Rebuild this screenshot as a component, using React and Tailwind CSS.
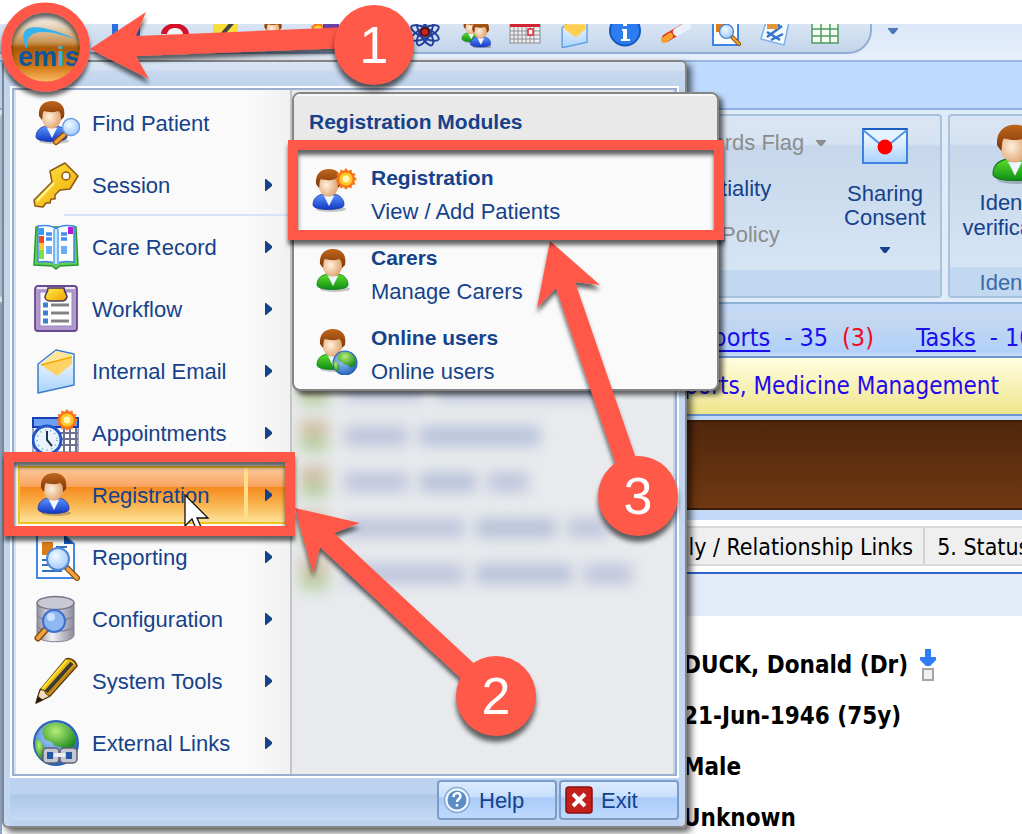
import React from "react";

const ui = "font-['Liberation_Sans',Arial,sans-serif]";
const tahoma = "font-['DejaVu_Sans_Condensed','DejaVu_Sans',sans-serif]";

function Defs() {
  return (
    <svg className="absolute h-0 w-0" aria-hidden="true">
      <defs>
        <linearGradient id="hair" x1="0" y1="0" x2="0" y2="1">
          <stop offset="0" stopColor="#c0661c" />
          <stop offset="1" stopColor="#7a3506" />
        </linearGradient>
        <radialGradient id="face" cx="0.4" cy="0.5" r="0.65">
          <stop offset="0" stopColor="#fff0dd" />
          <stop offset="1" stopColor="#dc9a63" />
        </radialGradient>
        <linearGradient id="blueCoat" x1="0" y1="0" x2="0" y2="1">
          <stop offset="0" stopColor="#5b95ff" />
          <stop offset="1" stopColor="#1437c4" />
        </linearGradient>
        <linearGradient id="greenCoat" x1="0" y1="0" x2="0" y2="1">
          <stop offset="0" stopColor="#5fdc2a" />
          <stop offset="1" stopColor="#0e8f17" />
        </linearGradient>
        <radialGradient id="lens" cx="0.4" cy="0.35" r="0.7">
          <stop offset="0" stopColor="#f2faff" />
          <stop offset="1" stopColor="#9cc6fb" />
        </radialGradient>
        <linearGradient id="gold" x1="0" y1="0" x2="1" y2="1">
          <stop offset="0" stopColor="#fff04a" />
          <stop offset="1" stopColor="#f0a000" />
        </linearGradient>
        <linearGradient id="paper" x1="0" y1="0" x2="0" y2="1">
          <stop offset="0" stopColor="#ffffff" />
          <stop offset="1" stopColor="#a9d2fb" />
        </linearGradient>
        <radialGradient id="sea" cx="0.4" cy="0.35" r="0.7">
          <stop offset="0" stopColor="#a9d6ff" />
          <stop offset="1" stopColor="#1d5cb8" />
        </radialGradient>
        <radialGradient id="land" cx="0.4" cy="0.3" r="0.8">
          <stop offset="0" stopColor="#b6ee7a" />
          <stop offset="1" stopColor="#0b7d10" />
        </radialGradient>
        <linearGradient id="drum" x1="0" y1="0" x2="1" y2="0">
          <stop offset="0" stopColor="#8e8e9e" />
          <stop offset="0.4" stopColor="#f1f1f6" />
          <stop offset="1" stopColor="#8a8a9c" />
        </linearGradient>
        <linearGradient id="orb" x1="0" y1="0" x2="0" y2="1">
          <stop offset="0" stopColor="#ffffff" />
          <stop offset="0.18" stopColor="#ead9c4" />
          <stop offset="0.42" stopColor="#c99352" />
          <stop offset="0.5" stopColor="#a85a04" />
          <stop offset="0.75" stopColor="#cf7411" />
          <stop offset="1" stopColor="#ffc069" />
        </linearGradient>
        <filter id="lift" x="-20%" y="-20%" width="140%" height="150%">
          <feDropShadow dx="0" dy="5" stdDeviation="2" floodColor="#000" floodOpacity="0.6" />
        </filter>
      </defs>
    </svg>
  );
}

function Body({ x = 0, coat = "blue" }) {
  const fill = coat === "blue" ? "url(#blueCoat)" : "url(#greenCoat)";
  return (
    <g transform={`translate(${x} 0)`}>
      <ellipse cx="23" cy="42" rx="15" ry="3" fill="#000" opacity="0.22" />
      <path d="M5 38c0-7 5-10 10-11h11c6 1 10 5 10 11 0 6-31 6-31 0z" fill={fill} stroke={coat === "blue" ? "#1a36a0" : "#0b7a14"} strokeWidth="0.8" />
      <path d="M16 29l5 10 5-10z" fill="#eef6ff" />
      <ellipse cx="20.500" cy="18" rx="10" ry="11.500" fill="url(#face)" />
      <path d="M8 17C7 7 13 2 21 2s14 5 12 16l-3 3c0-6-1-8-3-9-5 2-10 1-14 0-2 2-1 5-2 9z" fill="url(#hair)" />
    </g>
  );
}

function Sun({ x, y, r = 10 }) {
  const pts = [];
  for (let i = 0; i < 24; i++) {
    const a = (i * Math.PI) / 12;
    const d = i % 2 ? r * 0.78 : r;
    pts.push(`${(x + d * Math.cos(a)).toFixed(1)},${(y + d * Math.sin(a)).toFixed(1)}`);
  }
  return (
    <g>
      <polygon points={pts.join(" ")} fill="#f9751b" />
      <circle cx={x} cy={y} r={r * 0.6} fill="#ffc928" />
      <circle cx={x} cy={y} r={r * 0.32} fill="#fff7b5" />
    </g>
  );
}

function Magnifier({ x, y, r = 9 }) {
  return (
    <g>
      <path d={`M${x + r * 0.7} ${y + r * 0.7}L${x + r + 8} ${y + r + 8}`} stroke="#8a4d0a" strokeWidth="6" strokeLinecap="round" />
      <path d={`M${x + r * 0.9} ${y + r * 0.9}L${x + r + 8} ${y + r + 8}`} stroke="#eda43e" strokeWidth="3.500" strokeLinecap="round" />
      <circle cx={x} cy={y} r={r} fill="url(#lens)" stroke="#4f86d6" strokeWidth="2" />
    </g>
  );
}

function Globe({ x, y, r }) {
  return (
    <g transform={`translate(${x} ${y}) scale(${r / 22})`}>
      <circle r="22" fill="url(#sea)" stroke="#2c61b4" strokeWidth="2" />
      <path d="M-12-16C-6-22 8-22 15-14c5 5 6 14 2 18-4 5-8 5-10 1-3-2-8-1-10-4-2-4-7-2-9-6-1-4-3-6 0-11z" fill="url(#land)" />
      <path d="M-20-4c5 1 8 6 9 10 0 4-1 8-3 11-6-6-8-13-6-21z" fill="url(#land)" />
    </g>
  );
}

const Icon = ({ children, size = "h-12 w-12" }) => (
  <svg viewBox="0 0 48 48" className={`${size} shrink-0`} fill="none" aria-hidden="true">{children}</svg>
);

const icons = {
  find: (
    <Icon>
      <Body x={-1} />
      <path d="M32 36l-8 7" stroke="#8a4d0a" strokeWidth="6" strokeLinecap="round" />
      <path d="M32 36l-8 7" stroke="#eda43e" strokeWidth="3.500" strokeLinecap="round" />
      <circle cx="39" cy="28" r="8.500" fill="url(#lens)" stroke="#6d9fe0" strokeWidth="1.500" />
    </Icon>
  ),
  key: (
    <Icon>
      <path d="M18 10L33 2l13 13-8 13-10 1-5 5v4h-4l-1 4h-4l-3 4-8-1-1-6L20 21z" fill="url(#gold)" stroke="#8c5a12" strokeWidth="1.500" strokeLinejoin="round" />
      <path d="M22 22L5 40" stroke="#fff6a0" strokeWidth="2" />
      <circle cx="34" cy="15" r="4" fill="#fafafa" stroke="#8c5a12" strokeWidth="1.500" />
    </Icon>
  ),
  book: (
    <Icon>
      <path d="M4 4h40l2 38-18 1-4 3-4-3-18-1z" fill="#69c85c" stroke="#279c30" strokeWidth="1.500" />
      <path d="M6 3c7-1 14-1 18 3 4-4 11-4 18-3v36c-7-1-14-1-18 2-4-3-11-3-18-2z" fill="#fff" stroke="#3c86ee" strokeWidth="1.500" />
      <path d="M24 6v35" stroke="#79b8f7" strokeWidth="6" />
      <path d="M24 6v35" stroke="#c9e5ff" strokeWidth="2" />
      <path d="M14 11h6M14 16h6M29 11h6M29 16h6" stroke="#3f8ff5" strokeWidth="3.500" />
      <path d="M14 23h6v8h-6zM29 23h6v8h-6z" fill="#6badf5" />
      <path d="M7 5h5v7H7z" fill="#2d9ff0" /><path d="M7 13h5v7H7z" fill="#f3471d" /><path d="M7 20h5v7H7z" fill="#ffc534" /><path d="M7 27h5v9H7z" fill="#7be045" />
      <path d="M36 4h5v7h-5z" fill="#b31bd6" />
    </Icon>
  ),
  clip: (
    <Icon>
      <rect x="3" y="1" width="42" height="45" rx="3" fill="#b09bcc" stroke="#68498f" strokeWidth="1.800" />
      <path d="M5 3h38" stroke="#ede6f7" strokeWidth="2" />
      <rect x="8" y="7" width="32" height="34" fill="#fff" stroke="#9c86bd" />
      <path d="M16 3h16c0 4 3 6 3 9-1 3-3 4-5 4H18c-3 0-5-2-5-4 0-3 3-4 3-9z" fill="url(#gold)" stroke="#49365f" strokeWidth="1.500" />
      <path d="M19 20h18M19 28h18M19 36h18" stroke="#828282" strokeWidth="3" />
      <path d="M11 20h5M11 28h5M11 36h5" stroke="#3b83cc" strokeWidth="5" />
    </Icon>
  ),
  mail: (
    <Icon>
      <path d="M6 17L24 3l18 4v31L6 46z" fill="url(#paper)" stroke="#3b7fc9" strokeWidth="1.500" strokeLinejoin="round" />
      <path d="M9 18L24 4l16 4v9L25 29z" fill="#ffd264" />
      <path d="M9 18L24 4l16 4v2L9 18z" fill="#ffe59a" />
      <path d="M9 18l31-8" stroke="#f3a800" strokeWidth="1.500" />
    </Icon>
  ),
  appt: (
    <Icon>
      <rect x="1" y="9" width="45" height="34" fill="#fff" stroke="#5c5c86" />
      <path d="M1 9h45v9H1z" fill="#6ba2f7" stroke="#1940b0" strokeWidth="2" />
      <path d="M26 24h20M26 30h20M26 36h20M32 19v24M38 19v24M44 19v24" stroke="#71718f" strokeWidth="2" />
      <circle cx="15" cy="31" r="14" fill="#eaf4ff" stroke="#2357c8" strokeWidth="3" />
      <circle cx="15" cy="31" r="10" stroke="#8aa7cb" strokeDasharray="1 4" strokeWidth="2" />
      <path d="M15 22v9l5 6" stroke="#26324d" strokeWidth="2" />
      <Sun x={35} y={11} r={11} />
    </Icon>
  ),
  person: <Icon><Body x={1} /></Icon>,
  report: (
    <Icon>
      <path d="M5 2h27l10 9v34H5z" fill="#fff" stroke="#4188e6" strokeWidth="2" />
      <path d="M32 2l10 9H32z" fill="#1b56b8" />
      <path d="M10 9h11v13H10z" fill="#d97c15" />
      <path d="M24 14h11M10 27h10M10 32h12M10 38h20" stroke="#2e6fc0" strokeWidth="2" />
      <Magnifier x={26} y={26} r={11} />
    </Icon>
  ),
  config: (
    <Icon>
      <path d="M5 8v32c0 9 37 9 37 0V8z" fill="url(#drum)" stroke="#82828f" />
      <path d="M5 20c3 7 34 7 37 0M5 31c3 7 34 7 37 0" stroke="#858594" strokeWidth="1.500" />
      <ellipse cx="23.500" cy="8" rx="18.500" ry="6.500" fill="#c9c9d6" stroke="#777785" strokeWidth="1.500" />
      <path d="M15 33l-9 10" stroke="#8a4d0a" strokeWidth="7" strokeLinecap="round" />
      <path d="M14 34l-8 9" stroke="#eda43e" strokeWidth="4" strokeLinecap="round" />
      <circle cx="22" cy="26" r="11" fill="#8fb8f3" stroke="#3d6fd0" strokeWidth="2" />
      <circle cx="19" cy="22" r="4" fill="#c9e0ff" />
    </Icon>
  ),
  pencil: (
    <Icon>
      <path d="M4 46L8 33 34 2c4-2 10 2 11 7L18 39z" fill="#e8b51c" stroke="#59370e" strokeWidth="1.500" strokeLinejoin="round" />
      <path d="M14 35L40 6" stroke="#3c3a35" strokeWidth="4" />
      <path d="M16 37L43 9" stroke="#c08414" strokeWidth="2" />
      <path d="M10 32L35 3" stroke="#ffe02e" strokeWidth="2.500" />
      <path d="M4 46l4-13 4 0 2 4 4 2z" fill="#f3dcc0" stroke="#59370e" />
      <path d="M4 46l2-7 5 4z" fill="#2b1a10" />
    </Icon>
  ),
  links: (
    <Icon>
      <Globe x={24} y={24} r={22} />
      <rect x="11" y="29" width="16" height="15" rx="4" fill="#c4c7d2" stroke="#5e6274" strokeWidth="1.500" />
      <rect x="28" y="29" width="17" height="15" rx="4" fill="#c4c7d2" stroke="#5e6274" strokeWidth="1.500" />
      <rect x="15" y="33" width="6" height="7" fill="#2457a7" /><rect x="34" y="33" width="6" height="7" fill="#2457a7" />
      <path d="M22 36h11" stroke="#eceef3" strokeWidth="4" />
    </Icon>
  ),
};

const menu = [
  ["Find Patient", "find", false], ["Session", "key", true], ["Care Record", "book", true], ["Workflow", "clip", true],
  ["Internal Email", "mail", true], ["Appointments", "appt", true], ["Registration", "person", true], ["Reporting", "report", true],
  ["Configuration", "config", true], ["System Tools", "pencil", true], ["External Links", "links", true],
];

const Caret = ({ color = "#15428b" }) => (
  <svg viewBox="0 0 10 6" className="h-1.5 w-2.5 shrink-0" aria-hidden="true"><path d="M0 0h10v1L6 6H4L0 1z" fill={color} /></svg>
);

function MenuRow({ label, icon, more, active }) {
  return (
    <li className={active ? "px-0.5 py-0.5" : ""}>
      <button
        type="button"
        className={
          active
            ? "flex h-[58px] w-full items-center gap-3 border-2 border-[#f2c21f] bg-[linear-gradient(#fbc89c_0%,#f9a55f_34%,#f68b1f_36%,#f9b04a_65%,#fde39a_100%)] pl-3 text-left"
            : "flex h-[62px] w-full items-center gap-3 pl-4 text-left"
        }
      >
        {icons[icon]}
        <span className="grow">{label}</span>
        {more && (
          <span className={active ? "flex h-full w-[42px] items-center border-l-4 border-[#fbe08a] pl-[17px]" : "flex h-full w-[25px] items-center"}>
            <svg viewBox="0 0 7 12" className="h-3 w-[7px]" aria-hidden="true"><path d="M0 0h1l6 5v2l-6 5H0z" fill="#15428b" /></svg>
          </span>
        )}
      </button>
    </li>
  );
}

const toolbar = [
  ["Save", <g key="a"><rect x="3" y="2" width="28" height="28" fill="#2d6fe0" /><path d="M9 4h15v12H9z" fill="#dcebff" /><path d="M10 20h14v10H10z" fill="#0f3b8f" /></g>],
  ["Alert", <g key="b"><path d="M2 18C3 4 29 4 30 18z" fill="#d3122a" /><path d="M8 18c1-8 15-8 16 0v12H8z" fill="#f2f4f8" /></g>],
  ["Edit", <g key="c"><rect x="4" y="2" width="25" height="28" fill="#f7dd39" /><path d="M10 22L24 6" stroke="#444" strokeWidth="4" /></g>],
  ["Patient", <g key="d" transform="scale(.68)"><Body /></g>],
  ["Groups", <g key="e"><Sun x={9} y={14} r={8} /><path d="M14 8h16v20H14z" fill="#6b3fa0" /></g>],
  ["Folder", <g key="o"><rect x="4" y="6" width="24" height="20" fill="#f7d154" /></g>],
  ["Research", <g key="f" fill="none" stroke="#243f9c" strokeWidth="2"><ellipse cx="16" cy="17" rx="15" ry="5" transform="rotate(25 16 17)" /><ellipse cx="16" cy="17" rx="15" ry="5" transform="rotate(-25 16 17)" /><ellipse cx="16" cy="17" rx="5" ry="14" transform="rotate(30 16 17)" /><ellipse cx="16" cy="17" rx="5" ry="14" transform="rotate(-30 16 17)" /><circle cx="16" cy="16" r="4" fill="#c6291b" stroke="#5a1010" /></g>],
  ["Users", <g key="g"><g transform="translate(0 1) scale(.58)"><Body coat="green" /></g><g transform="translate(8 3) scale(.66)"><Body /></g></g>],
  ["Calendar", <g key="h"><rect x="1" y="4" width="30" height="23" fill="#eee" stroke="#8a8a8a" /><path d="M1 4h30v7H1z" fill="#d22330" /><path d="M1 15h30M1 19h30M1 23h30M5 11v16M9 11v16M13 11v16M17 11v16M21 11v16M25 11v16" stroke="#8f8f98" /><rect x="19" y="13" width="5" height="6" fill="#fff" stroke="#e5252f" strokeWidth="1.500" /></g>],
  ["Mail", <g key="i" transform="translate(-1 0) scale(.69)"><path d="M6 17L24 3l18 4v31L6 46z" fill="url(#paper)" stroke="#5d9be0" strokeWidth="2" /><path d="M9 12h31v7L26 31 9 19z" fill="#ffcf52" /></g>],
  ["Information", <g key="j"><circle cx="16" cy="14.500" r="15" fill="#2b7df0" stroke="#1558bd" strokeWidth="2" /><path d="M13 13h5v10h3v2h-9v-2h2v-8h-1zM14 7h4v3h-4z" fill="#fff" /></g>],
  ["Medication", <g key="k"><path d="M7 22L24 12" stroke="#e3341b" strokeWidth="8" strokeLinecap="round" /><path d="M18 16L28 10" stroke="#e9f2fc" strokeWidth="8" strokeLinecap="round" /><path d="M5 24l6-4" stroke="#f8a32b" strokeWidth="6" strokeLinecap="round" /></g>],
  ["Search report", <g key="l"><path d="M4 1h25v28H4z" fill="#fff" stroke="#3e85e5" strokeWidth="2" /><path d="M7 4h8v12H7z" fill="#dc7d19" /><g transform="scale(.7)"><Magnifier x={25} y={22} r={10} /></g></g>],
  ["Notes", <g key="m"><path d="M8 2l22 4-5 23-23-6z" fill="#f5faff" stroke="#7fb1ec" strokeWidth="1.500" /><path d="M9 12l12-3M8 16l13 8M8 21l15-11M12 24l12-6" stroke="#3475c8" strokeWidth="2.500" /><path d="M8 5h11v8H8z" fill="#e5963d" /></g>],
  ["Grid", <g key="n"><rect x="3" y="2" width="26" height="25" fill="#f3fbf3" stroke="#4f9a63" strokeWidth="1.500" /><path d="M3 13h26M3 20h26M12 2v25M21 2v25" stroke="#4f9a63" strokeWidth="1.500" /></g>],
];

function QuickAccess() {
  return (
    <div className="flex h-[38px] items-start overflow-hidden border-b-2 border-[#9ab6de] bg-[linear-gradient(#dbe8f9,#e6effb_90%)]">
      <div className="flex h-[30px] w-[872px] shrink-0 items-start overflow-hidden rounded-br-3xl border-r-2 border-b-2 border-[#93aed6] bg-[linear-gradient(#d9e5f4,#c3d5eb)] pl-[100px]">
        {toolbar.map(([name, art]) => (
          <button key={name} type="button" aria-label={name} className="-mt-2 flex w-[50px] shrink-0 justify-center">
            <svg viewBox="0 0 32 32" className="h-8 w-8" fill="none" aria-hidden="true">{art}</svg>
          </button>
        ))}
      </div>
      <button type="button" aria-label="Customise toolbar" className="ml-4 pt-1"><Caret color="#4a78b8" /></button>
    </div>
  );
}

function Ribbon() {
  const panel = "flex flex-col overflow-hidden rounded border-2 border-[#a9c3de] bg-[linear-gradient(#dbe6f4_0px,#d5e2f1_28px,#c6d7eb_30px,#d5e5f4_152px)]";
  return (
    <div className={`${ui} text-[22px] text-[#15428b]`}>
      <div className="h-12 border-b-2 border-[#8db2e3] bg-[#bedaff]" />
      <div className="flex h-[194px] gap-1.5 border-b-2 border-[#8fb0d8] bg-[#e0ebf8] pt-1 pb-1">
        <div className={`${panel} w-[942px] shrink-0`}>
          <div className="flex grow items-start pl-[631px]">
            <div className="flex w-[210px] flex-col gap-5 pt-3.5 leading-[26px]">
              <button type="button" className="flex items-center gap-3 whitespace-nowrap text-left text-[#8d8d8d]">Old Records Flag <Caret color="#8d8d8d" /></button>
              <button type="button" className="text-left">Confidentiality</button>
              <button type="button" className="text-left whitespace-nowrap text-[#8d8d8d]">Consent Policy</button>
            </div>
            <button type="button" className="flex w-[84px] flex-col items-center pt-3 leading-6">
              <svg viewBox="0 0 46 36" className="mb-[18px] h-9 w-[46px]" aria-hidden="true">
                <rect x="1" y="1" width="44" height="34" fill="url(#paper)" stroke="#3c82e2" strokeWidth="2" />
                <path d="M1 2l22 18L45 2" fill="#e4f1ff" stroke="#4f92ea" strokeWidth="2" />
                <path d="M1 1h44" stroke="#1c5fc4" strokeWidth="2" />
                <circle cx="23" cy="19" r="7.500" fill="#f00" />
              </svg>
              Sharing<br />Consent
              <span className="flex h-10 items-center"><Caret /></span>
            </button>
          </div>
          <div className="h-[29px] shrink-0 bg-[#c1d8f0]" />
        </div>
        <div className={`${panel} w-[134px] shrink-0`}>
          <button type="button" className="flex grow flex-col items-center pt-1.5 leading-[25px]">
            <Icon size="h-[66px] w-[66px]"><Body x={3} coat="green" /><circle cx="36" cy="34" r="8" fill="url(#greenCoat)" /></Icon>
            <span className="pt-0.5">Identity<br />verification</span>
          </button>
          <div className="h-[29px] shrink-0 bg-[#c1d8f0] text-center leading-8 text-[#3e6aaa]">Identity</div>
        </div>
      </div>
    </div>
  );
}

function PatientPage() {
  return (
    <div className={`${tahoma} grow border-l-2 border-[#8ba6cd] whitespace-nowrap`}>
      <div className="flex h-[54px] items-center gap-3.5 border-b-2 border-[#6a96d2] bg-[linear-gradient(#c3d9f8_0px,#c3d9f8_8px,#c8d8ec_10px,#b1d1fb_48px,#c3d9f8_50px)] pt-4 pl-[682px] text-[25px] leading-8 text-[#1a10ee]">
        <a href="#reports" className="underline decoration-2 underline-offset-4">Reports</a>
        <span>- 35</span>
        <span className="text-[#f00a1e]">(3)</span>
        <a href="#tasks" className="ml-7 underline decoration-2 underline-offset-4">Tasks</a>
        <span>- 10</span>
      </div>
      <div className="flex h-[58px] items-center border-b-2 border-[#6a96d2] bg-[linear-gradient(#fffee0,#efe48c)] pl-[655px] text-2xl text-[#2408ee]">Reports, Medicine Management</div>
      <div className="border-t-4 border-b-[10px] border-[#c3d9f8]">
        <div className="h-[90px] border-y-2 border-[#3a1c08] bg-[linear-gradient(#50270c,#703812)]" />
      </div>
      <div className="border-b-2 border-[#2d62cf] bg-white py-1.5">
        <div className="flex h-10 items-center border-y-2 border-[#d9d9d9] bg-[#efefef] pl-[638px] text-[23px] text-black">
          <button type="button" className="h-full border-r-2 border-[#d2d2d2] pt-0.5 pr-2.5">Family / Relationship Links</button>
          <button type="button" className="h-full pt-0.5 pl-3">5. Status</button>
        </div>
      </div>
      <div className="h-[42px] bg-[#e4ebf8]" />
      <dl className="flex flex-col gap-[19px] bg-white pt-[33px] pl-[681px] text-2xl leading-8 font-bold text-black">
        <dd className="flex items-center gap-3">DUCK, Donald (Dr)
          <svg viewBox="0 0 16 32" className="h-8 w-4" aria-hidden="true"><path d="M5 0h6v8h5v3l-6 6H6l-6-6V8h5z" fill="#2e7cf6" /><rect x="3" y="20" width="10" height="11" fill="#f0f0f0" stroke="#a5a5a5" strokeWidth="2" /></svg>
        </dd>
        <dd>21-Jun-1946 (75y)</dd>
        <dd>Male</dd>
        <dd>Unknown</dd>
      </dl>
    </div>
  );
}

const recent = [
  ["w-20", "w-40", "w-0"], ["w-16", "w-[120px]", "w-0"], ["w-16", "w-14", "w-10"], ["w-[120px]", "w-20", "w-10"], ["w-[120px]", "w-24", "w-12"],
];

function ModulesPopup() {
  const items = [
    ["Registration", "View / Add Patients", <Icon key="r"><Body x={-3} /><Sun x={35} y={12} r={11} /></Icon>],
    ["Carers", "Manage Carers", <Icon key="c"><Body x={1} coat="green" /></Icon>],
    ["Online users", "Online users", <Icon key="o"><Body x={1} coat="green" /><Globe x={34} y={36} r={12} /></Icon>],
  ];
  return (
    <section className="absolute top-[92px] left-[292px] w-[427px] overflow-hidden rounded-lg border-2 border-[#858585] bg-[#fafafa] text-[#15428b] shadow-[4px_4px_5px_rgba(0,0,0,0.6)]">
      <h2 className="h-[47px] border-t-2 border-[#f6f6f6] bg-[#e9e9e9] pl-[15px] text-[21px] leading-[52px] font-bold">Registration Modules</h2>
      <ul className="flex flex-col gap-3 pt-5">
        {items.map(([title, sub, icon]) => (
          <li key={title}>
            <button type="button" className="flex h-[68px] w-full items-start gap-3 pl-[17px] text-left leading-[34px]">
              <span className="pt-1.5">{icon}</span>
              <span><span className="block text-[21px] font-bold">{title}</span><span className="block text-[22px]">{sub}</span></span>
            </button>
          </li>
        ))}
      </ul>
    </section>
  );
}

function MainMenu() {
  return (
    <section className="absolute top-[60px] left-0.5 w-[685px] rounded-md border-2 border-[#858585] bg-[linear-gradient(#d8e4f5_0px,#d4e1f3_8px,#c8d9ef_9px,#c0d4ee_24px,#c2d8f2_700px)] px-1.5 pt-6 text-[22px] text-[#15428b] shadow-[4px_4px_7px_rgba(0,0,0,0.65)]">
      <div className="border-2 border-white">
        <div className="flex border-2 border-[#98afd0] bg-[#e8eaed]">
          <ul className="w-[278px] shrink-0 border-r-2 border-l-2 border-r-[#c5c5c5] border-l-[#d5e4f5] bg-[linear-gradient(90deg,#fafafa_85%,#f1f1f1)] pt-0.5">
            {menu.map(([label, icon, more]) => (
              <React.Fragment key={label}>
                {label === "Care Record" && <li aria-hidden="true" className="-mt-0.5 ml-12 h-0.5 bg-[#d5e4f7]" />}
                <MenuRow label={label} icon={icon} more={more} active={label === "Registration"} />
              </React.Fragment>
            ))}
          </ul>
          <div className="grow overflow-hidden border-r-2 border-[#c2d6f0] pt-[284px]" aria-hidden="true">
            <div className="flex flex-col gap-[14px] blur-[7px]">
              {recent.map((r, i) => (
                <div key={i} className="flex h-8 items-center gap-3 pl-2">
                  <span className="h-8 w-7 bg-[linear-gradient(#d9b9a5,#b3d6a6)]" />
                  <span className={`${r[0]} ml-1 h-5 bg-[#c0c6dd]`} />
                  <span className={`${r[1]} h-5 bg-[#b9c3da]`} />
                  <span className={`${r[2]} h-5 bg-[#c0c6dd]`} />
                </div>
              ))}
            </div>
          </div>
        </div>
      </div>
      <div className="flex h-12 justify-end gap-0.5 bg-[linear-gradient(#bdd2ef_16px,#aec7e8_17px,#c5d9f3_42px,#bdd2ef_43px)] pt-0.5">
        <button type="button" className="flex h-10 w-[120px] items-center gap-2 rounded border-2 border-[#7c9bc8] bg-[linear-gradient(#dcebff_0%,#c8dffc_40%,#a9cbf9_45%,#bfdafd_100%)] pl-1">
          <svg viewBox="0 0 28 28" className="h-7 w-7" fill="none" aria-hidden="true"><circle cx="14" cy="14" r="12.500" fill="#edf5ff" stroke="#86a8cf" strokeWidth="1.500" /><circle cx="14" cy="14" r="9.500" fill="#5b8dc4" /><path d="M10.500 11c0-5 7-5 7-1 0 3-3.500 3-3.500 6M14 18v2.500" stroke="#fff" strokeWidth="2.500" /></svg>
          Help
        </button>
        <button type="button" className="flex h-10 w-[120px] items-center gap-2 rounded border-2 border-[#7c9bc8] bg-[linear-gradient(#dcebff_0%,#c8dffc_40%,#a9cbf9_45%,#bfdafd_100%)] pl-1">
          <svg viewBox="0 0 28 28" className="h-7 w-7" fill="none" aria-hidden="true"><rect x="1" y="1" width="26" height="26" rx="3" fill="#c3201c" stroke="#8a0f0d" strokeWidth="1.500" /><path d="M8 8l12 12M20 8L8 20" stroke="#fff" strokeWidth="4" /></svg>
          Exit
        </button>
      </div>
    </section>
  );
}

function Badge({ n, place }) {
  return (
    <div className={`${place} absolute flex h-20 w-20 items-center justify-center rounded-full bg-[#ff594a] text-[52px] leading-none text-white shadow-[0_6px_5px_rgba(0,0,0,0.6)]`}>{n}</div>
  );
}

function Annotations() {
  return (
    <div className="pointer-events-none absolute inset-0">
      <svg className="absolute top-0 left-0 h-[834px] w-[1022px]" viewBox="0 0 1022 834" aria-hidden="true">
        <g filter="url(#lift)" fill="#ff594a">
          <path d="M90 49L146 12 136 36 350 27V48L136 56 149 79z" />
          <path d="M550 241L600 285 575 282 640 470 620 476 556 288 537 308z" />
          <path d="M295 508L360 523 334 533 482 671 467 684 320 547 313 573z" />
        </g>
        <circle cx="45.500" cy="47" r="39.500" stroke="#ff594a" strokeWidth="10" fill="none" filter="url(#lift)" />
        <g fill="none" stroke="#ff594a" strokeWidth="10" filter="url(#lift)">
          <rect x="9" y="457" width="281" height="74" />
          <rect x="293" y="145" width="426" height="90" />
        </g>
      </svg>
      <Badge n="1" place="top-[5px] left-[334px]" />
      <Badge n="2" place="top-[656px] left-[456px]" />
      <Badge n="3" place="top-[456px] left-[598px]" />
    </div>
  );
}

export default function App() {
  return (
    <main className={`${ui} relative flex min-h-screen flex-col overflow-hidden bg-white pt-6`}>
      <Defs />
      <QuickAccess />
      <Ribbon />
      <PatientPage />
      <MainMenu />
      <ModulesPopup />
      <button type="button" aria-label="emis" className="absolute top-3 left-2.5">
        <svg viewBox="0 0 72 72" className="h-[72px] w-[72px]" aria-hidden="true">
          <circle cx="36" cy="36" r="35" fill="url(#orb)" />
          <path d="M16 36C6 12 24 8 70 29 38 17 15 15 17 36z" fill="#35b3ee" />
          <text x="8" y="54" fontSize="27" fontWeight="bold" fontFamily="Liberation Sans" fill="#0c56a0">em<tspan fill="#35b3ee">i</tspan>s</text>
        </svg>
      </button>
      <svg viewBox="0 0 26 32" className="absolute top-[494px] left-[184px] h-8 w-[26px]" aria-hidden="true">
        <path d="M1 1v31l7-7 5 12 5-2-5-11h11z" fill="#fff" stroke="#111" strokeWidth="1.300" />
      </svg>
      <Annotations />
    </main>
  );
}
